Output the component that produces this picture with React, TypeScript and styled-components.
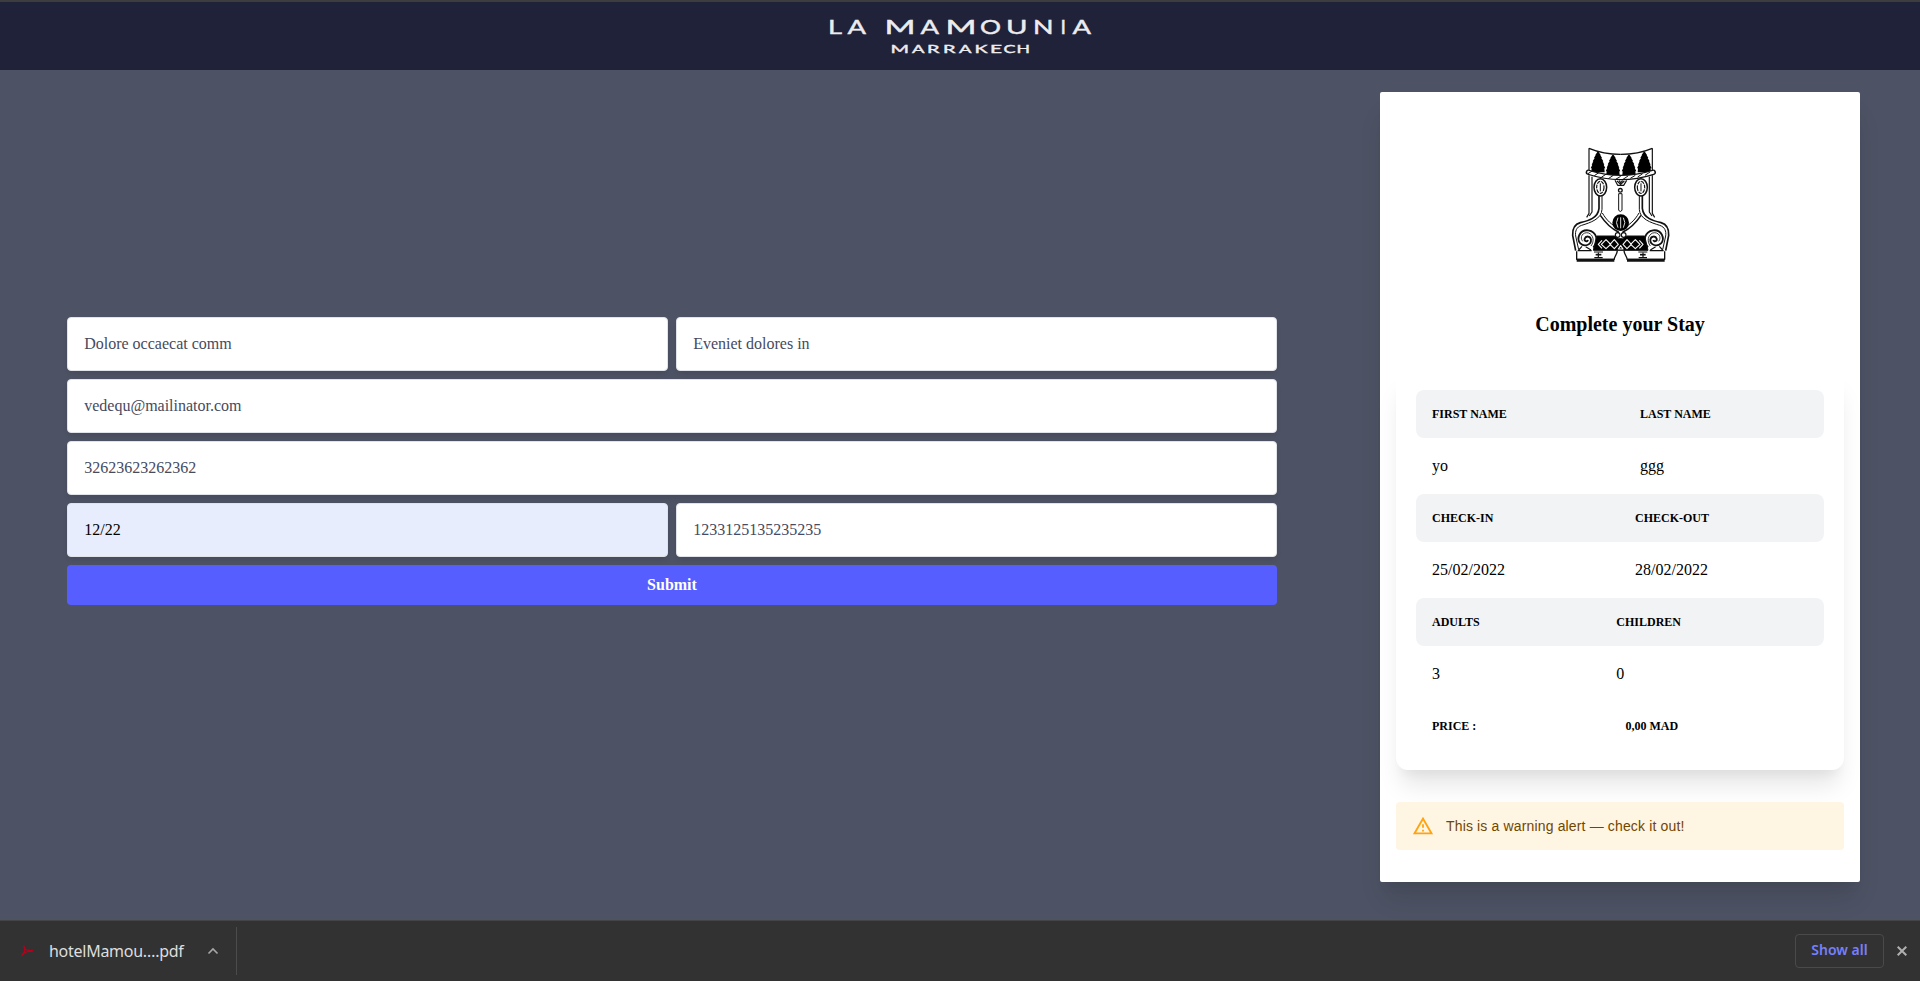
import React from "react";
import styled, { createGlobalStyle } from "styled-components";

const GlobalStyle = createGlobalStyle`
  *, *::before, *::after { box-sizing: border-box; }
  body { margin: 0; background: #4d5264; font-family: "Liberation Serif", "Times New Roman", serif; color: #000; }
`;

const Page = styled.div`
  display: flex;
  flex-direction: column;
  height: 981px;
  overflow: hidden;
`;

const Header = styled.header`
  display: flex;
  justify-content: center;
  flex: none;
  height: 70px;
  border-top: 2px solid #3d3d3f;
  background: #202239;
`;

const Main = styled.main`
  display: flex;
  flex: 1;
  justify-content: space-between;
  align-items: flex-start;
  min-height: 0;
  padding: 22px 60px 0 67px;
`;

const Form = styled.form`
  display: grid;
  grid-template-columns: 1fr 1fr;
  gap: 8px;
  width: 1210px;
  margin-top: 225px;
`;

const Field = styled.input<{ $wide?: boolean; $autofilled?: boolean }>`
  grid-column: ${(p) => (p.$wide ? "1 / -1" : "auto")};
  width: 100%;
  height: 54px;
  padding: 0 16px 0 16.2px;
  border: 1px solid #e0e3ea;
  border-radius: 4px;
  outline: none;
  background: ${(p) => (p.$autofilled ? "#e8edfe" : "#fff")};
  color: ${(p) => (p.$autofilled ? "#000" : "#454a60")};
  font: 16px/24px "Liberation Serif", "Times New Roman", serif;
  box-shadow: 0 4px 6px -1px rgba(0, 0, 0, 0.06), 0 2px 4px -1px rgba(0, 0, 0, 0.04);
`;

const Submit = styled.button`
  grid-column: 1 / -1;
  height: 40px;
  padding: 0;
  border: 0;
  border-radius: 4px;
  background: #575eff;
  color: #fff;
  font: bold 16px/24px "Liberation Serif", "Times New Roman", serif;
`;

const raised = "0 20px 25px -5px rgba(0, 0, 0, 0.1), 0 10px 10px -5px rgba(0, 0, 0, 0.04)";

const StayCard = styled.aside`
  display: flex;
  flex-direction: column;
  align-items: center;
  width: 480px;
  height: 790px;
  padding: 38px 16px 32px;
  border-radius: 2px;
  background: #fff;
  box-shadow: ${raised};
`;

const Title = styled.h1`
  margin: 30px 0 32px;
  font-size: 20px;
  line-height: 28px;
  font-weight: bold;
`;

const Summary = styled.section`
  width: 100%;
  padding: 20px;
  border-radius: 12px;
  background: #fff;
  box-shadow: ${raised};
`;

const Row = styled.div<{ $first: number }>`
  display: grid;
  grid-template-columns: ${(p) => p.$first}px 1fr;
  align-items: center;
`;

const HeadRow = styled(Row)<{ $plain?: boolean }>`
  height: 48px;
  border-radius: 8px;
  background: ${(p) => (p.$plain ? "transparent" : "#f2f3f5")};
  font-size: 12px;
  line-height: 16px;
  font-weight: bold;
`;

const ValueRow = styled(Row)`
  height: 56px;
  font-size: 16px;
  line-height: 24px;
`;

const Cell = styled.span`
  padding: 0 16px;
`;

const Alert = styled.div`
  display: flex;
  align-items: center;
  gap: 12px;
  flex: none;
  width: 100%;
  height: 48px;
  margin-top: 32px;
  padding: 0 16px;
  border-radius: 4px;
  background: #fff5e3;
  color: #704600;
  font: 14px/20px "Liberation Sans", Arial, sans-serif;
  letter-spacing: 0.15px;
`;

const Downloads = styled.footer`
  display: flex;
  align-items: center;
  justify-content: space-between;
  flex: none;
  height: 61px;
  border-top: 1px solid #444;
  background: #323232;
  font-family: "Noto Sans", sans-serif;
`;

const DownloadItem = styled.div`
  display: flex;
  align-items: center;
  width: 237px;
  height: 48px;
  padding-left: 20px;
  border-right: 1px solid #4b4b4b;
`;

const FileName = styled.span`
  width: 138px;
  margin: 0 20px 0 15px;
  color: #dedede;
  font-size: 16px;
  letter-spacing: -0.27px;
  white-space: nowrap;
`;

const DownloadActions = styled.div`
  display: flex;
  align-items: center;
  gap: 13px;
  padding-right: 13px;
`;

const ShowAll = styled.button`
  width: 89px;
  height: 34px;
  padding: 0 0 2px;
  border: 1px solid #4a4a4a;
  border-radius: 4px;
  background: transparent;
  color: #7780fa;
  font: 600 14px/20px "Noto Sans", sans-serif;
`;

type Glyph = [string, number, number];

const nameGlyphs: Glyph[] = [
  ["L", 828, 14], ["A", 847.5, 18.5], ["M", 884.5, 31], ["A", 920.5, 18.5], ["M", 945.5, 31],
  ["O", 980, 21], ["U", 1006, 21.5], ["N", 1033, 20.5], ["I", 1060.5, 5.5], ["A", 1072.5, 18.5],
];
const cityGlyphs: Glyph[] = [
  ["M", 890.5, 18.5], ["A", 912, 12.5], ["R", 927, 12.5], ["R", 943, 12.5], ["A", 959, 12.5],
  ["K", 974.5, 13], ["E", 990, 12], ["C", 1003.5, 12], ["H", 1016.5, 13.5],
];

function SpacedText({ glyphs, y, size }: { glyphs: Glyph[]; y: number; size: number }) {
  return (
    <text y={y} fontFamily="Lato" fontSize={size} fill="#ececef" stroke="#ececef" strokeWidth="0.4">
      {glyphs.map(([ch, x, w], i) => (
        <tspan key={i} x={x} textLength={w} lengthAdjust="spacingAndGlyphs">{ch}</tspan>
      ))}
    </text>
  );
}

function Wordmark() {
  return (
    <svg width="280" height="56" viewBox="820 2 280 56">
      <SpacedText glyphs={nameGlyphs} y={33.8} size={18.5} />
      <SpacedText glyphs={cityGlyphs} y={52.5} size={12.2} />
    </svg>
  );
}

function HalfEmblem() {
  return (
    <g>
      <path d="M147 55V122M147 136V250L140 262M156 140V246L148 258" strokeWidth="3.5" />
      <path d="M147 55Q190 73 242 73" strokeWidth="4" />
      <ellipse cx="181" cy="172" rx="19" ry="26" strokeWidth="4.5" />
      <ellipse cx="181" cy="172" rx="11" ry="18" strokeWidth="3.5" strokeDasharray="11 3" />
      <path d="M181 160V184" strokeWidth="3" />
      <path d="M177 198V235C174 264 146 272 121 278C101 284 97 300 98 316L107 362" strokeWidth="5" />
      <path d="M186 198V238C185 267 151 278 125 286C109 291 105 304 107 318L116 359" strokeWidth="3" />
      <path d="M181 256C193 274 211 294 235 306V320" strokeWidth="4.5" />
      <path d="M187 249C199 270 216 286 235 294" strokeWidth="3" />
      <path d="M160 352C178 334 170 305 145 301C119 298 108 326 121 340C133 352 154 345 153 329C151 317 137 317 134 326C132 334 142 337 144 330" strokeWidth="5.5" />
      <path d="M153 348C164 333 160 315 146 309C128 304 118 322 128 334" strokeWidth="2.5" />
      <path d="M113 362H155M126 349L116 360M137 350L153 360" strokeWidth="3.5" />
      <path d="M110 364V388H220M232 362C231 374 224 377 222 390" strokeWidth="4" />
      <path d="M110 391H223" strokeWidth="9" />
      <path d="M162 366H189M175 368V385M163 383H188" strokeWidth="3.5" />
      <path d="M167 374H184" strokeWidth="5" />
    </g>
  );
}

function Tree({ x, y }: { x: number; y: number }) {
  return (
    <path
      transform={`translate(${x} ${y})`}
      d="M-2 0H2L8 9H7L12 18H10L16 28H14L19 38H17L22 49H19L20 61H-20L-19 49H-22L-17 38H-19L-14 28H-16L-10 18H-12L-7 9H-8Z"
      fill="#000"
      stroke="none"
    />
  );
}

function Emblem() {
  return (
    <svg width="160" height="150" viewBox="0 0 480 450" fill="none" stroke="#111" strokeLinejoin="round">
      <HalfEmblem />
      <g transform="translate(484 0) scale(-1 1)">
        <HalfEmblem />
      </g>
      <Tree x={174} y={66} />
      <Tree x={219} y={75} />
      <Tree x={267} y={75} />
      <Tree x={313} y={66} />
      <path d="M145 127Q242 158 340 127" stroke="#111" strokeWidth="16" strokeLinecap="round" />
      <path d="M146 127Q242 158 339 127" stroke="#fff" strokeWidth="9" strokeLinecap="round" />
      <path d="M144 131l14-9M163 137l15-10M184 142l15-10M205 146l15-10M227 148l15-9M249 148l15-10M271 145l15-9M293 141l15-10M315 136l15-10" strokeWidth="3" />
      <path d="M225 151L233 166H251L260 151M231 153L242 163L253 153M237 152L242 158L248 152" strokeWidth="3.5" />
      <circle cx="241" cy="181" r="5.5" strokeWidth="4" />
      <path d="M236 191V241Q241 248 246 241V191Z" strokeWidth="3" />
      <circle cx="242" cy="278" r="25" fill="#000" stroke="none" />
      <path d="M234 263Q225 278 234 293M250 263Q259 278 250 293M242 262V295" stroke="#ddd" strokeWidth="3" />
      <circle cx="233" cy="315" r="7" fill="#fff" strokeWidth="3.5" />
      <circle cx="251" cy="315" r="7" fill="#fff" strokeWidth="3.5" />
      <path d="M170 318H224L236 326H248L260 318H314L324 361H160Z" fill="#000" strokeWidth="3" />
      <path d="M186 331L175 343L186 355M198 329L184 343L198 356L212 343ZM223 329L210 343L223 356L235 343ZM261 329L249 343L261 356L274 343ZM286 329L272 343L286 356L300 343ZM298 331L309 343L298 355M235 357L242 347L249 357Z" stroke="#f4f4f4" strokeWidth="3.5" />
    </svg>
  );
}

const groups = [
  { first: 208, heads: ["FIRST NAME", "LAST NAME"], values: ["yo", "ggg"] },
  { first: 203, heads: ["CHECK-IN", "CHECK-OUT"], values: ["25/02/2022", "28/02/2022"] },
  { first: 184.3, heads: ["ADULTS", "CHILDREN"], values: ["3", "0"] },
];

export default function App() {
  return (
    <Page>
      <GlobalStyle />
      <Header>
        <Wordmark />
      </Header>
      <Main>
        <Form onSubmit={(e) => e.preventDefault()}>
          <Field defaultValue="Dolore occaecat comm" />
          <Field defaultValue="Eveniet dolores in" />
          <Field $wide defaultValue="vedequ@mailinator.com" />
          <Field $wide defaultValue="32623623262362" />
          <Field $autofilled defaultValue="12/22" />
          <Field defaultValue="1233125135235235" />
          <Submit>Submit</Submit>
        </Form>
        <StayCard>
          <Emblem />
          <Title>Complete your Stay</Title>
          <Summary>
            {groups.map((g) => (
              <React.Fragment key={g.heads[0]}>
                <HeadRow $first={g.first}>
                  {g.heads.map((h) => <Cell key={h}>{h}</Cell>)}
                </HeadRow>
                <ValueRow $first={g.first}>
                  {g.values.map((v) => <Cell key={v}>{v}</Cell>)}
                </ValueRow>
              </React.Fragment>
            ))}
            <HeadRow $first={193.5} $plain>
              <Cell>PRICE :</Cell>
              <Cell>0,00 MAD</Cell>
            </HeadRow>
          </Summary>
          <Alert>
            <svg width="22" height="22" viewBox="0 0 24 24" fill="#ffa310">
              <path d="M12 5.99L19.53 19H4.47L12 5.99M12 2L1 21h22L12 2zm1 14h-2v2h2v-2zm0-6h-2v4h2v-4z" />
            </svg>
            <span>This is a warning alert — check it out!</span>
          </Alert>
        </StayCard>
      </Main>
      <Downloads>
        <DownloadItem>
          <svg width="14" height="14" viewBox="0 0 14 14" fill="none" stroke="#b8001c" strokeWidth="1.1">
            <path d="M3.5 2Q5 2.5 5 5Q7 7 12.5 6.5Q13 7.7 9 7.2Q5 7.6 2 11.5Q2 10 4.5 8Q5.5 5 3.5 2" />
          </svg>
          <FileName>hotelMamou….pdf</FileName>
          <svg width="12" height="8" viewBox="0 0 12 8" fill="none" stroke="#a8a8a8" strokeWidth="1.6">
            <path d="M1.5 6.5L6 2L10.5 6.5" />
          </svg>
        </DownloadItem>
        <DownloadActions>
          <ShowAll>Show all</ShowAll>
          <svg width="10" height="10" viewBox="0 0 10 10" stroke="#b0b0b0" strokeWidth="2">
            <path d="M.7.7L9.3 9.3M9.3.7L.7 9.3" />
          </svg>
        </DownloadActions>
      </Downloads>
    </Page>
  );
}
